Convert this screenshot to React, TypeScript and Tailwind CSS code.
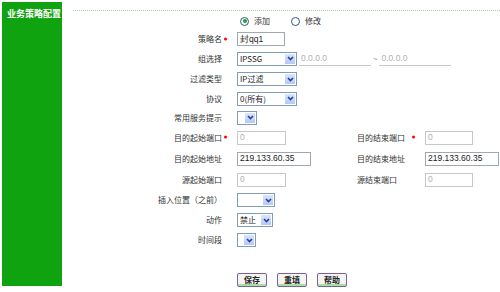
import React from "react";

const font = "font-['Noto_Sans_CJK_SC','Liberation_Sans',sans-serif]";

const Chevron = () => (
  <svg width="7" height="5" viewBox="0 0 7 5">
    <path d="M1 1 L3.5 3.5 L6 1" fill="none" stroke="#22409a" strokeWidth="1.6" />
  </svg>
);

const Select = ({ className, value }: { className: string; value?: string }) => (
  <div className={`flex h-[14px] items-stretch border border-[#7f9db9] bg-white ${className}`}>
    <div className="flex flex-1 items-center overflow-hidden whitespace-nowrap pl-[2px] text-[8px] leading-none text-[#222]">
      {value}
    </div>
    <div className="flex w-[12px] items-center justify-center border border-white bg-gradient-to-b from-[#dbe5fc] to-[#b4c8f6]">
      <Chevron />
    </div>
  </div>
);

const Input = ({
  className,
  value,
  muted,
}: {
  className: string;
  value: string;
  muted?: boolean;
}) => (
  <div
    className={`flex h-[14px] items-center border pl-[2px] text-[8.5px] leading-none font-['Liberation_Sans',sans-serif] ${
      muted ? "border-[#c8c8c8] text-[#b0b0b0]" : "border-[#a0a8b0] text-[#222]"
    } ${className}`}
  >
    {value}
  </div>
);

// red required mark
const Dot = ({ gap }: { gap: string }) => (
  <span className={`absolute top-1/2 h-[3px] w-[3px] -translate-y-1/2 rounded-full bg-[#ff0000] ${gap}`} />
);

const Row = ({
  h,
  label,
  req,
  children,
}: {
  h: string;
  label?: string;
  req?: boolean;
  children?: React.ReactNode;
}) => (
  <div className={`flex items-center ${h}`}>
    <div className="w-[149px] text-right text-[8px] leading-none text-[#333]">
      {label && (
        <span className="relative">
          {label}
          {req && <Dot gap="left-[calc(100%+2px)]" />}
        </span>
      )}
    </div>
    <div className="ml-[15px] flex items-center">{children}</div>
  </div>
);

const Pair = ({
  left,
  label,
  req,
  right,
}: {
  left: React.ReactNode;
  label: string;
  req?: boolean;
  right: React.ReactNode;
}) => (
  <>
    <div className="w-[120px]">{left}</div>
    <div className="w-[68px] text-[8px] leading-none text-[#333]">
      <span className="relative">
        {label}
        {req && <Dot gap="left-[calc(100%+7px)]" />}
      </span>
    </div>
    {right}
  </>
);

const Radio = ({ checked, label }: { checked?: boolean; label: string }) => (
  <div className="flex items-center">
    <div className="flex h-[9px] w-[9px] items-center justify-center rounded-full border border-[#2d5a8a] bg-white">
      {checked && <div className="h-[4px] w-[4px] rounded-full bg-[#21a121]" />}
    </div>
    <span className="ml-[5px] text-[8px] leading-none text-[#333]">{label}</span>
  </div>
);

const Btn = ({ label }: { label: string }) => (
  <button className="flex h-[14px] w-[30px] items-center justify-center rounded-[2px] border border-[#7b5ea8] bg-[#f4f4f0] text-[8px] font-bold leading-none text-[#222] shadow-[inset_0_-2px_0_#a8e0a0]">
    {label}
  </button>
);

const App = () => {
  return (
    <div className={`flex h-[292px] w-[500px] bg-white ${font}`}>
      <div className="ml-[2px] mt-[2px] h-[284px] w-[60px] bg-[#0fa30f] pl-[5px] pt-[7px]">
        <div className="text-[9px] font-bold leading-none text-white">业务策略配置</div>
      </div>
      <div className="ml-[11px] flex-1 pt-[10px]">
        <div className="border-t border-dotted border-[#9fd89f]" />
        <div className="mt-[1px]">
          <Row h="h-[18px]">
            <div className="ml-[3px] flex items-center gap-[21px]">
              <Radio checked label="添加" />
              <Radio label="修改" />
            </div>
          </Row>
          <Row h="h-[18px]" label="策略名" req>
            <Input className="w-[48px]" value="封qq1" />
          </Row>
          <Row h="h-[21px]" label="组选择">
            <Select className="w-[60px]" value="IPSSG" />
            <div className="ml-[2px] w-[72px] border-b border-[#c8c8c8] pl-[2px] text-[8.5px] leading-[13px] text-[#b0b0b0] font-['Liberation_Sans',sans-serif]">
              0.0.0.0
            </div>
            <span className="mx-[2px] text-[8px] text-[#888]">~</span>
            <div className="w-[72px] border-b border-[#c8c8c8] pl-[2px] text-[8.5px] leading-[13px] text-[#b0b0b0] font-['Liberation_Sans',sans-serif]">
              0.0.0.0
            </div>
          </Row>
          <Row h="h-[20px]" label="过滤类型">
            <Select className="w-[60px]" value="IP过滤" />
          </Row>
          <Row h="h-[19px]" label="协议">
            <Select className="w-[60px]" value="0(所有)" />
          </Row>
          <Row h="h-[19px]" label="常用服务提示">
            <Select className="w-[20px]" />
          </Row>
          <Row h="h-[21px]" label="目的起始端口" req>
            <Pair
              left={<Input className="w-[49px]" value="0" muted />}
              label="目的结束端口"
              req
              right={<Input className="w-[48px]" value="0" muted />}
            />
          </Row>
          <Row h="h-[21px]" label="目的起始地址">
            <Pair
              left={<Input className="w-[74px]" value="219.133.60.35" />}
              label="目的结束地址"
              right={<Input className="w-[74px]" value="219.133.60.35" />}
            />
          </Row>
          <Row h="h-[21px]" label="源起始端口">
            <Pair
              left={<Input className="w-[49px]" value="0" muted />}
              label="源结束端口"
              right={<Input className="w-[48px]" value="0" muted />}
            />
          </Row>
          <Row h="h-[20px]" label="插入位置（之前）">
            <Select className="w-[38px]" />
          </Row>
          <Row h="h-[20px]" label="动作">
            <Select className="w-[36px]" value="禁止" />
          </Row>
          <Row h="h-[20px]" label="时间段">
            <Select className="w-[19px]" />
          </Row>
          <div className="h-[20px]" />
          <Row h="h-[20px]">
            <div className="flex gap-[10px]">
              <Btn label="保存" />
              <Btn label="重填" />
              <Btn label="帮助" />
            </div>
          </Row>
        </div>
      </div>
    </div>
  );
};

export default App;
